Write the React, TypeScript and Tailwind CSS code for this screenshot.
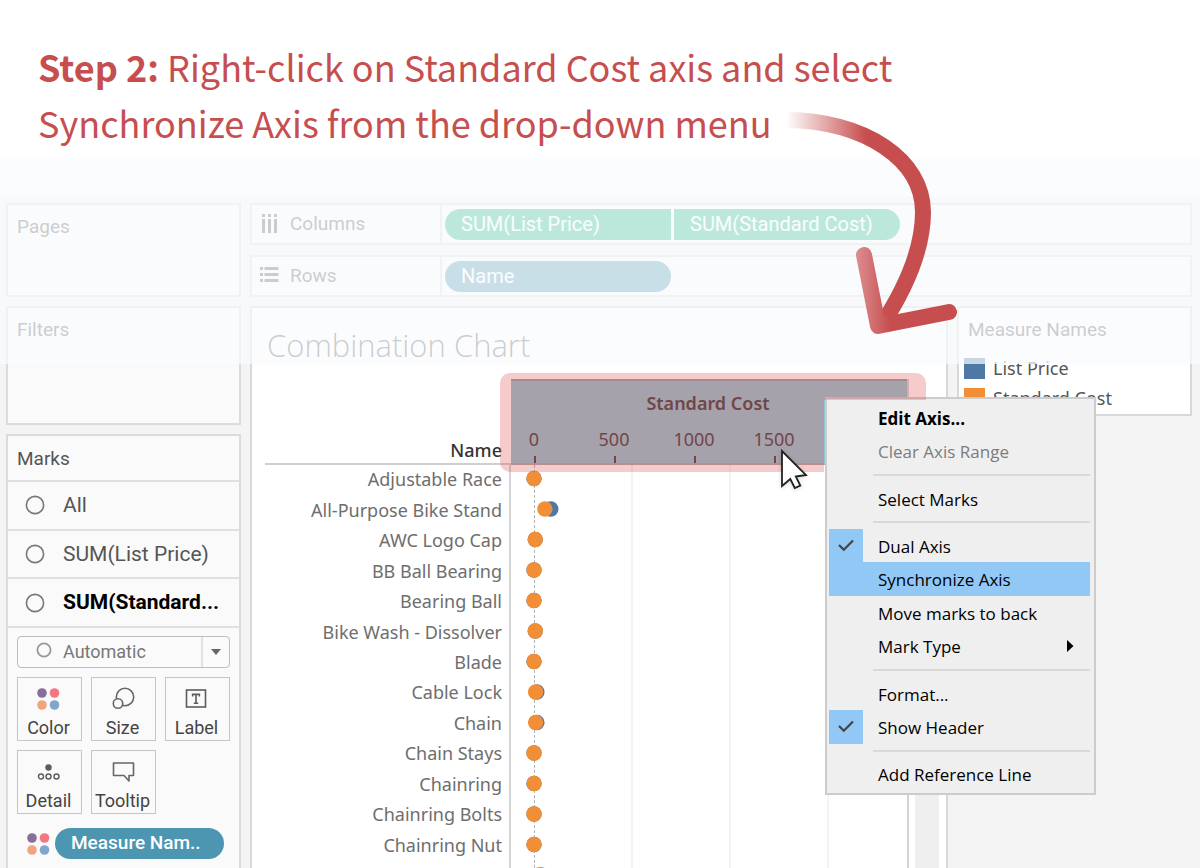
import type { ReactNode } from "react";

interface MenuItem {
  label: string;
  bold?: boolean;
  disabled?: boolean;
  checked?: boolean;
  active?: boolean;
  submenu?: boolean;
}

interface ChartRow {
  name: string;
  cost: number;
  list: number;
}

// Each inner list is one group, groups are split by a separator
const MENU_GROUPS: MenuItem[][] = [
  [
    { label: "Edit Axis...", bold: true },
    { label: "Clear Axis Range", disabled: true },
  ],
  [{ label: "Select Marks" }],
  [
    { label: "Dual Axis", checked: true },
    { label: "Synchronize Axis", active: true },
    { label: "Move marks to back" },
    { label: "Mark Type", submenu: true },
  ],
  [{ label: "Format..." }, { label: "Show Header", checked: true }],
  [{ label: "Add Reference Line" }],
];

const ROWS: ChartRow[] = [
  { name: "Adjustable Race", cost: 0, list: 0 },
  { name: "All-Purpose Bike Stand", cost: 68, list: 105 },
  { name: "AWC Logo Cap", cost: 8, list: 8 },
  { name: "BB Ball Bearing", cost: 0, list: 0 },
  { name: "Bearing Ball", cost: 0, list: 0 },
  { name: "Bike Wash - Dissolver", cost: 8, list: 8 },
  { name: "Blade", cost: 0, list: 0 },
  { name: "Cable Lock", cost: 10, list: 18 },
  { name: "Chain", cost: 10, list: 18 },
  { name: "Chain Stays", cost: 0, list: 0 },
  { name: "Chainring", cost: 0, list: 0 },
  { name: "Chainring Bolts", cost: 0, list: 0 },
  { name: "Chainring Nut", cost: 0, list: 0 },
];

const TICKS = [0, 500, 1000, 1500];
const GRID_LINES = [122, 220, 318];
const ROW_HEIGHT = 30.5;

function scaleX(value: number) {
  return 24 + value * 0.16;
}

function Panel({
  className = "",
  children,
}: {
  className?: string;
  children?: ReactNode;
}) {
  return (
    <section className={`border-2 border-[#dcdcdc] bg-[#fafafa] ${className}`}>
      {children}
    </section>
  );
}

function ColorDots() {
  return (
    <svg className="size-6" viewBox="0 0 24 24">
      <circle cx="5" cy="6" r="4.8" fill="#876f99" />
      <circle cx="17.5" cy="6" r="4.8" fill="#f77482" />
      <circle cx="5" cy="18" r="4.8" fill="#f1a57e" />
      <circle cx="17.5" cy="18" r="4.8" fill="#82a6cb" />
    </svg>
  );
}

function SizeIcon() {
  return (
    <svg className="size-6" viewBox="0 0 24 24" fill="none" stroke="#666" strokeWidth="1.6">
      <circle cx="14" cy="10" r="8.7" />
      <circle cx="7" cy="16.5" r="4.7" fill="#fafafa" />
    </svg>
  );
}

function LabelIcon() {
  return (
    <svg className="size-6" viewBox="0 0 24 24" fill="none" stroke="#5c5c5c" strokeWidth="1.6">
      <rect x="1.5" y="3" width="19" height="17" />
      <path d="M7.6 9.6V7.4h6.8v2.2M11 7.4v8.8M8.8 16.2h4.4" />
    </svg>
  );
}

function DetailIcon() {
  return (
    <svg className="size-6" viewBox="0 0 24 24" fill="none" stroke="#5c5c5c" strokeWidth="1.4">
      <circle cx="11.5" cy="7.5" r="3.2" fill="#5c5c5c" stroke="none" />
      <circle cx="4" cy="16.5" r="2.5" />
      <circle cx="11.5" cy="16.5" r="2.5" />
      <circle cx="19.5" cy="16.5" r="2.5" />
    </svg>
  );
}

function TooltipIcon() {
  return (
    <svg className="size-6" viewBox="0 0 24 24" fill="none" stroke="#666" strokeWidth="1.6">
      <path d="M2.5 3h20v12.5H18V21l-5-5.5H2.5z" strokeLinejoin="round" />
    </svg>
  );
}

const MARK_BUTTONS = [
  { label: "Color", icon: <ColorDots /> },
  { label: "Size", icon: <SizeIcon /> },
  { label: "Label", icon: <LabelIcon /> },
  { label: "Detail", icon: <DetailIcon /> },
  { label: "Tooltip", icon: <TooltipIcon /> },
];

const MARK_CARDS = [
  { label: "All", selected: false },
  { label: "SUM(List Price)", selected: false },
  { label: "SUM(Standard...", selected: true },
];

function Sidebar() {
  return (
    <aside className="flex w-[235px] shrink-0 flex-col gap-[9px] text-[19px] text-[#555]">
      <Panel className="h-[94px] shrink-0 px-[9px] py-2">
        <h2>Pages</h2>
      </Panel>
      <Panel className="h-[119px] shrink-0 px-[9px] py-2">
        <h2>Filters</h2>
      </Panel>

      <Panel className="flex-1 border-b-0">
        <h2 className="flex h-11 items-center px-[9px] pt-0.5">Marks</h2>
        <div className="flex h-[146px] flex-col">
          {MARK_CARDS.map((card) => (
            <button
              key={card.label}
              className="flex w-full flex-1 items-center gap-[18px] border-t-2 border-[#e0e0e0] pl-[17px] text-[21px] leading-7"
            >
              <svg className="size-5" viewBox="0 0 20 20" fill="none" stroke="#777" strokeWidth="1.6">
                <circle cx="10" cy="10" r="8.6" />
              </svg>
              <span className={card.selected ? "pb-0.5 font-bold text-black" : ""}>
                {card.label}
              </span>
            </button>
          ))}
        </div>

        <div className="border-t-2 border-[#e0e0e0] px-[9px] pt-2">
          <div className="relative text-lg">
            <select
              aria-label="Mark type"
              className="block h-8 w-full appearance-none rounded-sm border border-[#bdbdbd] bg-[#fafafa] pl-[45px] text-[#777]"
            >
              <option>Automatic</option>
            </select>
            <svg
              className="pointer-events-none absolute top-1.5 left-[19px] size-4"
              viewBox="0 0 16 16"
              fill="none"
              stroke="#999"
              strokeWidth="1.8"
            >
              <circle cx="8" cy="8" r="6.6" />
            </svg>
            <span className="pointer-events-none absolute inset-y-px right-px flex w-7 items-center justify-center border-l-2 border-[#e2e2e2]">
              <svg className="h-1.5 w-2.5" viewBox="0 0 10 6" fill="#666">
                <path d="M0 0h10L5 6z" />
              </svg>
            </span>
          </div>

          <div className="mt-[9px] grid grid-cols-3 gap-[9px] text-lg text-[#444]">
            {MARK_BUTTONS.map((mark) => (
              <button
                key={mark.label}
                className="flex h-16 flex-col items-center justify-between border border-[#c6c6c6] pt-[9px] pr-0.5 leading-6"
              >
                {mark.icon}
                {mark.label}
              </button>
            ))}
          </div>

          <div className="mt-3.5 flex items-center gap-1 pl-2.5">
            <ColorDots />
            <button className="mr-1.5 h-[31px] flex-1 rounded-full bg-[#4c96b1] pl-4 text-left font-medium text-white">
              Measure Nam..
            </button>
          </div>
        </div>
      </Panel>
    </aside>
  );
}

function Shelf({
  label,
  icon,
  children,
}: {
  label: string;
  icon: ReactNode;
  children: ReactNode;
}) {
  return (
    <Panel className="flex h-[42px]">
      <div className="flex w-[190px] items-center gap-2.5 border-r-2 border-[#dcdcdc] pl-2 text-[19px] text-[#555]">
        {icon}
        {label}
      </div>
      <div className="flex items-center gap-[3px] pl-[3px] text-xl text-white">
        {children}
      </div>
    </Panel>
  );
}

function ColumnsIcon() {
  return (
    <svg className="size-5" viewBox="0 0 20 20" fill="#555">
      <path d="M2 0h3v3H2zM8 0h3v3H8zM14 0h3v3h-3zM2 5h3v14H2zM8 5h3v14H8zM14 5h3v14h-3z" />
    </svg>
  );
}

function RowsIcon() {
  return (
    <svg className="size-5" viewBox="0 0 20 20" fill="#555">
      <path d="M0 1h3v3H0zM0 7h3v3H0zM0 13h3v3H0zM4.5 1h14v3h-14zM4.5 7h14v3h-14zM4.5 13h14v3h-14z" />
    </svg>
  );
}

function Chart() {
  return (
    <section className="flex min-w-0 flex-1 flex-col overflow-hidden border-2 border-b-0 border-[#d8d8d8] bg-white">
      <h1 className="h-[71px] shrink-0 pt-[15px] pl-[15px] font-['Open_Sans'] text-[31px] leading-[44px] font-light text-[#555]">
        Combination Chart
      </h1>

      <div className="flex flex-1 pl-[13px] font-['Noto_Sans'] text-lg">
        {/* Row headers */}
        <div className="flex w-[246px] shrink-0 flex-col text-right text-[#6e6e6e]">
          <div className="flex h-[86px] shrink-0 items-end justify-end border-b-2 border-[#cfcfcf] pr-[9px] leading-[26px] font-medium text-[#333]">
            Name
          </div>
          <div className="flex-1 border-r-2 border-[#d3d3d3] pr-[7px]">
            <ul className="grid h-[396px] auto-rows-fr">
              {ROWS.map((row) => (
                <li key={row.name} className="flex items-center justify-end pb-0.5">
                  {row.name}
                </li>
              ))}
            </ul>
          </div>
        </div>

        {/* Axis and marks */}
        <div className="flex w-[398px] shrink-0 flex-col border-r-2 border-[#d3d3d3]">
          <svg className="h-[86px] w-full shrink-0" fill="#444">
            <rect width="100%" height="86" fill="#90c5d3" />
            <rect width="100%" height="2" fill="#8aa6ad" />
            <rect y="84" width="100%" height="2" fill="#a9a9a9" />
            <text x="197" y="31" textAnchor="middle" fontWeight="600">
              Standard Cost
            </text>
            {TICKS.map((tick) => (
              <g key={tick}>
                <text x={scaleX(tick) - 1} y="67" textAnchor="middle">
                  {tick}
                </text>
                <rect x={scaleX(tick) - 1} y="77" width="2" height="7" />
              </g>
            ))}
          </svg>
          <svg className="w-full flex-1">
            {GRID_LINES.map((x) => (
              <path key={x} d={`M${x - 1} 0v900`} stroke="#f3f3f3" strokeWidth="2" />
            ))}
            <path d="M23.5 0v900" stroke="#b5b5b5" strokeDasharray="3 2" />
            {[...ROWS, { name: "", cost: 30, list: 45 }].map((row, i) => (
              <g key={i} transform="translate(-1 0)">
                <circle cx={scaleX(row.list)} cy={13.5 + i * ROW_HEIGHT} r="7.7" fill="#4e79a7" />
                <circle cx={scaleX(row.cost)} cy={13.5 + i * ROW_HEIGHT} r="7.7" fill="#f28e35" />
              </g>
            ))}
          </svg>
        </div>

        {/* Scrollbar track */}
        <div className="mt-[86px] ml-1.5 w-6 bg-[#efefef]" />
      </div>
    </section>
  );
}

function Legend() {
  return (
    <section className="h-[110px] w-[235px] shrink-0 overflow-hidden border-2 border-[#d8d8d8] bg-white text-[19px] text-[#555]">
      <h2 className="px-[9px] pt-2 leading-7">Measure Names</h2>
      <ul className="mt-[9px] font-['Noto_Sans'] text-lg">
        <li className="flex h-[30px] items-center gap-2 pl-[5px]">
          <span className="size-[21px] bg-[#4e79a7]" />
          List Price
        </li>
        <li className="flex h-[30px] items-center gap-2 pl-[5px]">
          <span className="size-[21px] bg-[#f28e35]" />
          Standard Cost
        </li>
      </ul>
    </section>
  );
}

function ContextMenu() {
  return (
    <div
      role="menu"
      className="absolute top-[397px] left-[825px] flex h-[398px] w-[271px] flex-col border-2 border-[#cccccc] bg-[#efefef] py-0.5 pr-1 pl-0.5 font-['Open_Sans'] text-[17px] text-black"
    >
      {MENU_GROUPS.map((group, i) => (
        <div key={i} className="contents">
          {i > 0 && (
            <div className="flex flex-2 items-center">
              <hr className="ml-11 w-full border-t-2 border-[#d9d9d9]" />
            </div>
          )}
          {group.map((item) => (
            <button
              key={item.label}
              role="menuitem"
              disabled={item.disabled}
              className={`flex flex-5 items-center text-left leading-6 ${
                item.active ? "bg-[#91c8f6]" : ""
              } ${item.bold ? "font-bold" : ""} ${item.disabled ? "text-[#7c7c7c]" : ""}`}
            >
              <span
                className={`mr-[15px] flex w-[34px] items-center justify-center self-stretch ${
                  item.checked ? "bg-[#91c8f6]" : ""
                }`}
              >
                {item.checked && (
                  <svg className="size-4" viewBox="0 0 16 16" fill="none" stroke="#444" strokeWidth="2.2">
                    <path d="M1 7l4.8 4.8L15 2.5" />
                  </svg>
                )}
              </span>
              <span className="flex-1 pt-0.5">{item.label}</span>
              {item.submenu && (
                <svg className="mr-4 h-3 w-2" viewBox="0 0 8 12">
                  <path d="M1 0l6.5 6L1 12z" />
                </svg>
              )}
            </button>
          ))}
        </div>
      ))}
    </div>
  );
}

function Annotations() {
  return (
    <svg className="pointer-events-none absolute top-0 left-0 h-[500px] w-[1200px]" fill="none">
      <defs>
        <linearGradient id="tail" gradientUnits="userSpaceOnUse" x1="786" y1="0" x2="866" y2="0">
          <stop offset="0" stopColor="#c74e4f" stopOpacity="0" />
          <stop offset="1" stopColor="#c74e4f" />
        </linearGradient>
        <linearGradient id="head" gradientUnits="userSpaceOnUse" x1="856" y1="0" x2="890" y2="0">
          <stop offset="0" stopColor="#dc8e90" />
          <stop offset="1" stopColor="#c74e4f" />
        </linearGradient>
      </defs>
      <path
        d="M786 120C866 121 923 160 923 212C923 252 904 291 881 326"
        stroke="url(#tail)"
        strokeWidth="16"
      />
      <path
        d="M864 255L878 326L949 312"
        stroke="url(#head)"
        strokeWidth="16"
        strokeLinecap="round"
        strokeLinejoin="round"
      />
      {/* Mouse pointer */}
      <path
        d="M782 451v35l8.3-7 4.500 9 5.500-2.500-4.500-9 10.200-1.500z"
        className="drop-shadow-sm"
        fill="#fff"
        stroke="#222"
        strokeWidth="1.8"
      />
    </svg>
  );
}

export default function App() {
  return (
    <div className="relative flex h-screen flex-col overflow-hidden bg-white font-[Roboto]">
      <header className="h-[157px] shrink-0 px-[38px] pt-[38px] font-['Noto_Sans_CJK_SC',sans-serif] text-4xl leading-[56px] text-[#c74e4f]">
        <p>
          <strong>Step 2:</strong> Right-click on Standard Cost axis and select
          <br />
          Synchronize Axis from the drop-down menu
        </p>
      </header>

      <div className="relative flex min-h-0 flex-1 flex-col">
        <div className="h-10 shrink-0 bg-white" />
        <div className="flex min-h-0 flex-1 gap-[9px] bg-[#f4f4f4] pt-1.5 pr-2 pl-1.5">
          <Sidebar />
          <main className="flex min-w-0 flex-1 flex-col">
            <div className="flex flex-col gap-2.5">
              <Shelf label="Columns" icon={<ColumnsIcon />}>
                <button className="h-[31px] w-[226px] rounded-l-full bg-[#1db782] pl-4 text-left">
                  SUM(List Price)
                </button>
                <button className="h-[31px] w-[226px] rounded-r-full bg-[#1db782] pl-4 text-left">
                  SUM(Standard Cost)
                </button>
              </Shelf>
              <Shelf label="Rows" icon={<RowsIcon />}>
                <button className="h-[31px] w-[226px] rounded-full bg-[#4c96b1] pl-4 text-left">
                  Name
                </button>
              </Shelf>
            </div>
            <div className="mt-[9px] flex min-h-0 flex-1 gap-[9px]">
              <Chart />
              <Legend />
            </div>
          </main>
        </div>

        {/* Haze over the part of the workspace that is not in focus */}
        <div className="pointer-events-none absolute inset-x-0 top-0 h-[207px] bg-[#f9fbfe]/72" />
      </div>

      <ContextMenu />

      {/* Highlight around the axis, cut out where the menu opens */}
      <div className="pointer-events-none absolute top-[373px] left-[500px] h-[99px] w-[426px] rounded-[10px] bg-[#dd4c4c]/29 [clip-path:polygon(0_0,100%_0,100%_27px,324px_27px,324px_100%,0_100%)]" />

      <Annotations />
    </div>
  );
}
